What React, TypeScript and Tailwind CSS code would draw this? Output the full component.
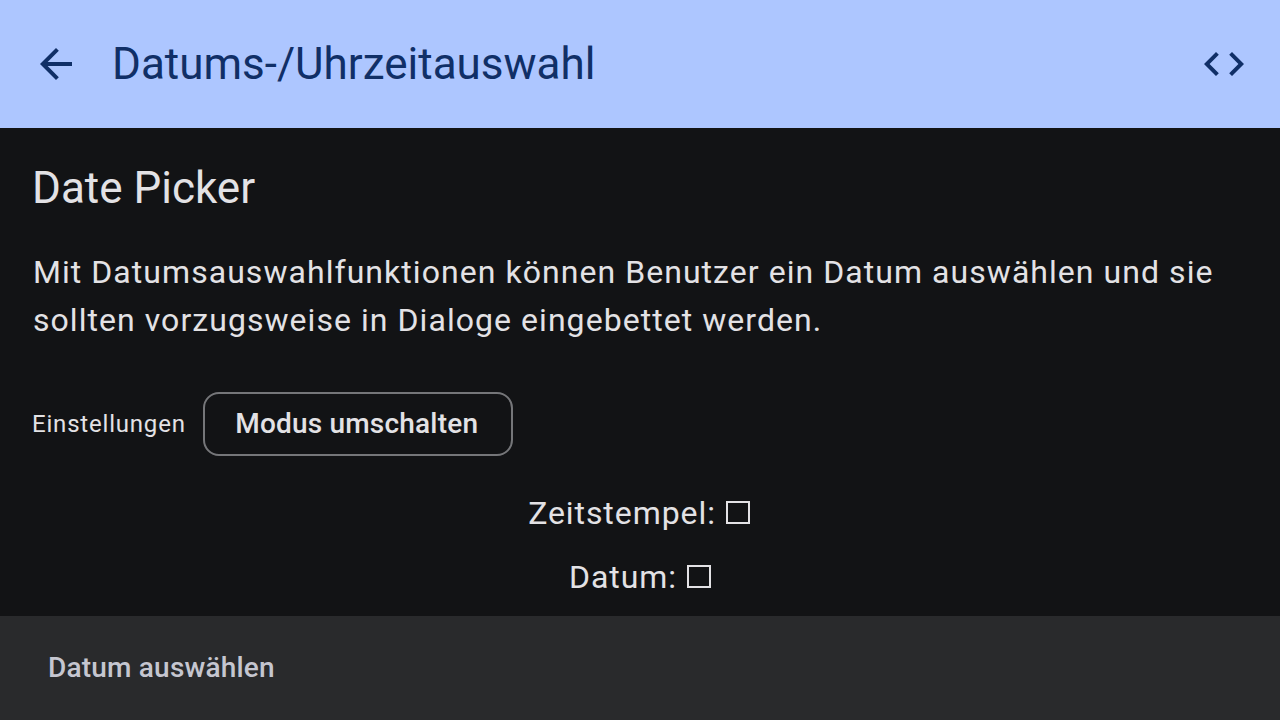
import type { ReactNode } from "react";

function Readout({ children, className = "" }: { children: ReactNode; className?: string }) {
  return (
    <p className={`flex h-16 items-center justify-center text-[32px] tracking-[0.93px] ${className}`}>
      {children}
      <svg className="ml-[9px]" width="26" height="26" viewBox="0 0 26 26" fill="none" stroke="currentColor" strokeWidth="2">
        <rect x="2" y="2" width="22" height="21" />
      </svg>
    </p>
  );
}

export default function App() {
  return (
    <div className="flex h-[720px] w-[1280px] flex-col overflow-hidden bg-[#121315] font-[Roboto,sans-serif] text-[#e3e2e5]">
      <header className="flex h-32 shrink-0 items-center bg-[#adc6ff] px-8 text-[#102f67]">
        <svg width="48" height="48" viewBox="0 0 24 24" fill="currentColor">
          <path d="M20 11H7.83l5.59-5.59L12 4l-8 8 8 8 1.41-1.41L7.83 13H20v-2z" />
        </svg>
        <h1 className="ml-8 text-[44px] leading-none">Datums-/Uhrzeitauswahl</h1>
        <svg className="ml-auto" width="48" height="48" viewBox="0 0 24 24" fill="currentColor">
          <path d="M9.4 16.6L4.8 12l4.6-4.6L8 6l-6 6 6 6 1.4-1.4zm5.2 0l4.6-4.6-4.6-4.6L16 6l6 6-6 6-1.4-1.4z" />
        </svg>
      </header>
      <main className="flex grow flex-col pt-8">
        <h2 className="px-8 text-[44px] leading-[56px]">Date Picker</h2>
        <p className="mt-8 pl-[33px] text-[32px] leading-[48px] tracking-[1.05px]">
          Mit Datumsauswahlfunktionen können Benutzer ein Datum auswählen und sie
          <br />
          sollten vorzugsweise in Dialoge eingebettet werden.
        </p>
        <div className="mt-12 flex h-16 items-center px-8">
          <span className="text-[24px] tracking-[0.8px]">Einstellungen</span>
          <button className="ml-[17px] h-16 w-[310px] rounded-2xl border-2 border-[#757679] pr-0.5 text-[28px] font-medium tracking-[0.2px]">
            Modus umschalten
          </button>
        </div>
        <div className="mt-[25px]">
          <Readout className="pr-px">Zeitstempel:</Readout>
          <Readout className="pl-px">Datum:</Readout>
        </div>
      </main>
      <footer className="flex h-[104px] shrink-0 items-center bg-[#292a2c] px-12 text-[28px] font-medium tracking-[0.2px] text-[#c5c6d0]">
        Datum auswählen
      </footer>
    </div>
  );
}
